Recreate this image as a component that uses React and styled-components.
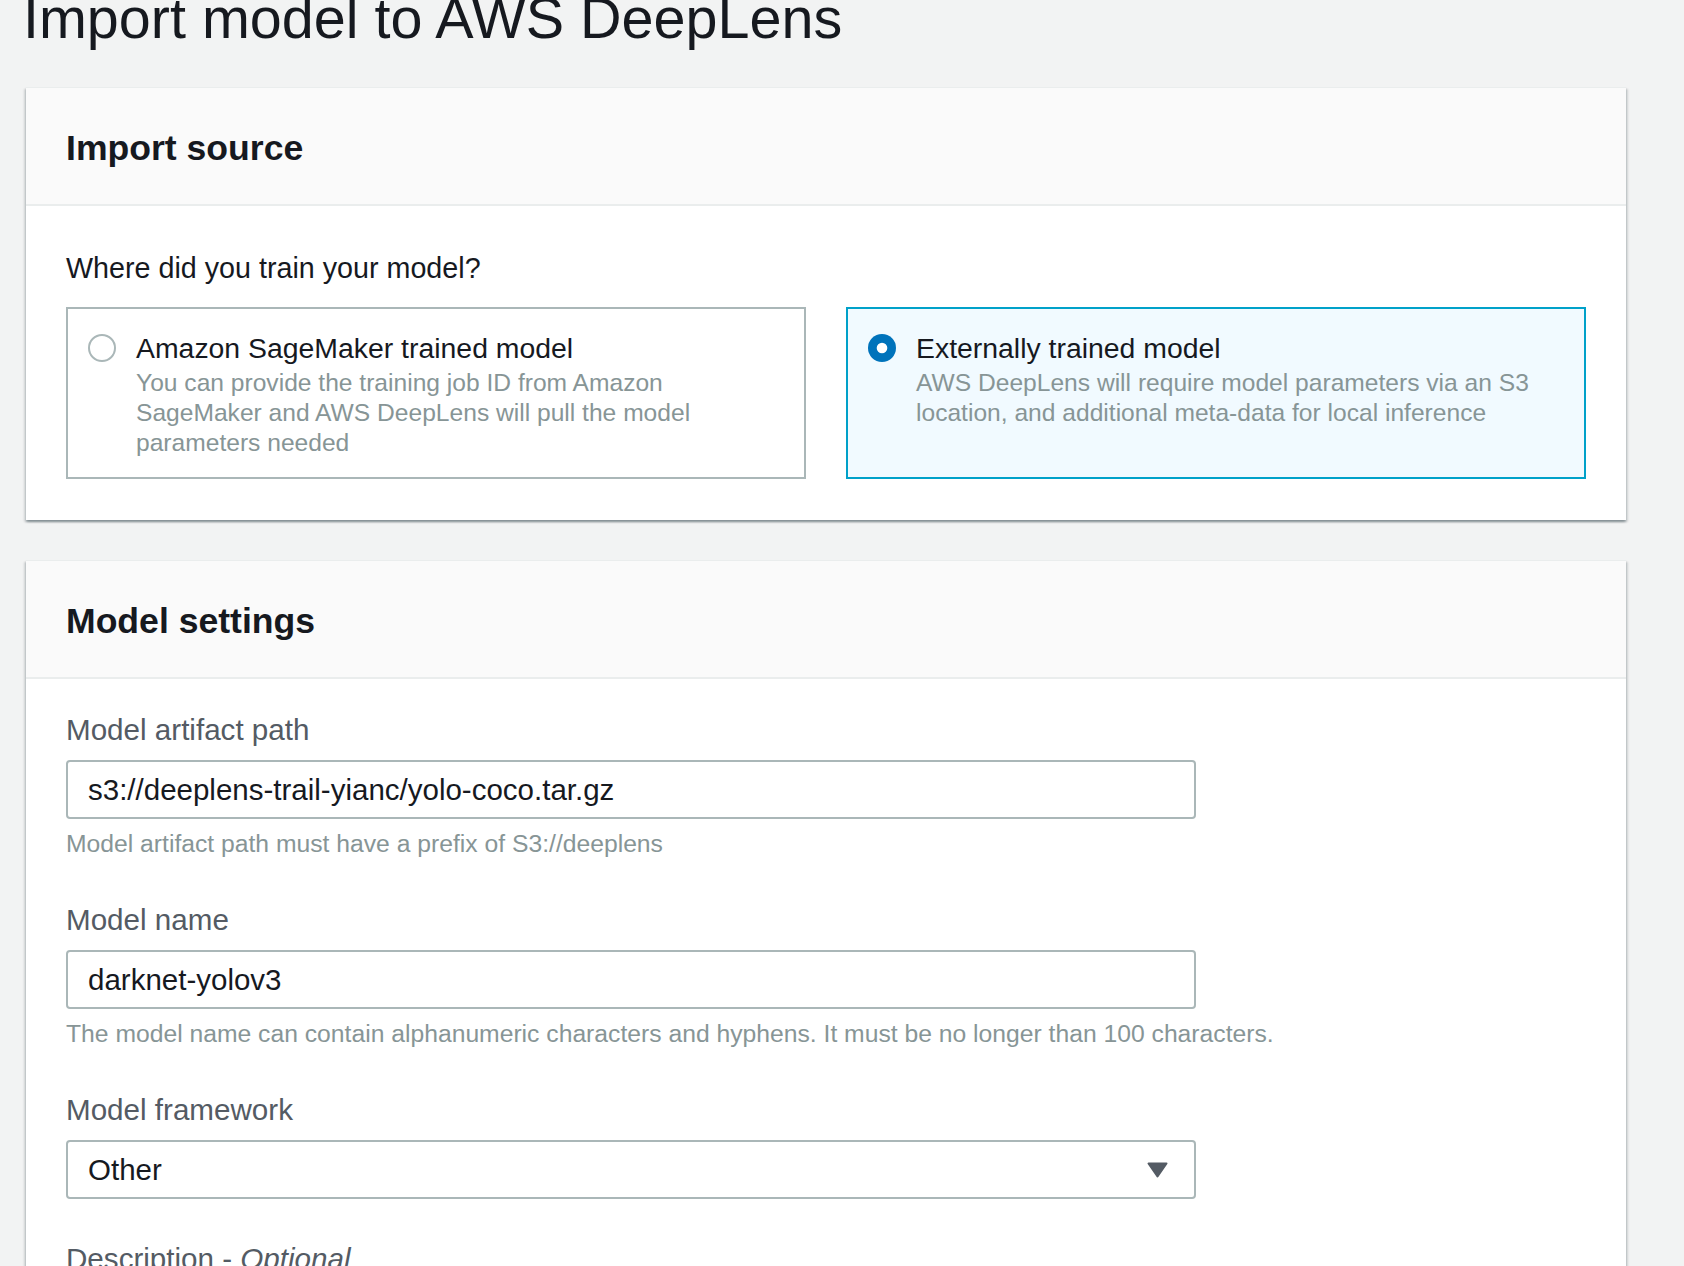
import styled, { createGlobalStyle } from 'styled-components'

const GlobalStyle = createGlobalStyle`
    html, body {
        margin: 0;
        padding: 0;
        background: #f2f3f3;
        font-family: "Liberation Sans", Arial, sans-serif;
        color: #16191f;
    }
    * { box-sizing: border-box; }
`

const sources = [
    {
        id: 'sagemaker',
        title: 'Amazon SageMaker trained model',
        desc: 'You can provide the training job ID from Amazon SageMaker and AWS DeepLens will pull the model parameters needed',
    },
    {
        id: 'external',
        title: 'Externally trained model',
        desc: 'AWS DeepLens will require model parameters via an S3 location, and additional meta-data for local inference',
    },
]

const RadioIcon = ({ checked }) => (
    <svg width="28" height="28" viewBox="0 0 28 28">
        {checked ? (
            <>
                <circle cx="14" cy="14" r="14" fill="#0073bb" />
                <circle cx="14" cy="14" r="5.3" fill="#ffffff" />
            </>
        ) : (
            <circle cx="14" cy="14" r="13" fill="#ffffff" stroke="#aab7b8" strokeWidth="2" />
        )}
    </svg>
)

const Caret = () => (
    <svg width="21" height="16" viewBox="0 0 21 16">
        <path d="M1.5 1.5 L19.5 1.5 L10.5 14.5 Z" fill="#545b64" stroke="#545b64" strokeWidth="2" strokeLinejoin="round" />
    </svg>
)

const App = () => {
    const selected = 'external'

    return (
        <Page>
            <GlobalStyle />
            <Title>Import model to AWS DeepLens</Title>

            <Card>
                <CardHeader>
                    <H2>Import source</H2>
                </CardHeader>
                <CardBody $top={42}>
                    <Question>Where did you train your model?</Question>
                    <Tiles>
                        {sources.map((s) => (
                            <Tile key={s.id} $checked={s.id === selected}>
                                <RadioBox>
                                    <RadioIcon checked={s.id === selected} />
                                </RadioBox>
                                <TileText>
                                    <TileTitle>{s.title}</TileTitle>
                                    <TileDesc>{s.desc}</TileDesc>
                                </TileText>
                            </Tile>
                        ))}
                    </Tiles>
                </CardBody>
            </Card>

            <Card>
                <CardHeader>
                    <H2>Model settings</H2>
                </CardHeader>
                <CardBody $top={31}>
                    <Field>
                        <Label>Model artifact path</Label>
                        <Input readOnly value="s3://deeplens-trail-yianc/yolo-coco.tar.gz" />
                        <Hint>Model artifact path must have a prefix of S3://deeplens</Hint>
                    </Field>
                    <Field>
                        <Label>Model name</Label>
                        <Input readOnly value="darknet-yolov3" />
                        <Hint>The model name can contain alphanumeric characters and hyphens. It must be no longer than 100 characters.</Hint>
                    </Field>
                    <Field>
                        <Label>Model framework</Label>
                        <Select>
                            <span>Other</span>
                            <Caret />
                        </Select>
                    </Field>
                    <Field>
                        <Label>Description - <em>Optional</em></Label>
                        <Input readOnly value="" />
                    </Field>
                </CardBody>
            </Card>
        </Page>
    )
}

export default App

const Page = styled.div`
    width: 1684px;
    padding: 0 58px 40px 26px;
`

const Title = styled.h1`
    margin: -14px 0 37px -3px;
    font-size: 57.5px;
    line-height: 64px;
    font-weight: 400;
    color: #16191f;
`

const Card = styled.section`
    background: #ffffff;
    border-top: 1px solid #eaeded;
    box-shadow: 0 2px 2px 0 rgba(0, 28, 36, 0.3), 2px 2px 2px 0 rgba(0, 28, 36, 0.12), -2px 2px 2px 0 rgba(0, 28, 36, 0.12);
    margin-bottom: 40px;
`

const CardHeader = styled.div`
    background: #fafafa;
    border-bottom: 2px solid #eaeded;
    padding: 40px 40px 36px;
`

const H2 = styled.h2`
    margin: 0;
    font-size: 35.6px;
    line-height: 40px;
    font-weight: 700;
    color: #16191f;
`

const CardBody = styled.div`
    padding: ${(p) => p.$top}px 40px 41px;
`

const Question = styled.div`
    font-size: 28.7px;
    line-height: 40px;
    color: #16191f;
    margin-bottom: 19px;
`

const Tiles = styled.div`
    display: grid;
    grid-template-columns: 1fr 1fr;
    gap: 40px;
`

const Tile = styled.div`
    display: flex;
    gap: 20px;
    min-height: 172px;
    padding: 19px 20px 18px 20px;
    border: 2px solid ${(p) => (p.$checked ? '#00a1c9' : '#aab7b8')};
    background: ${(p) => (p.$checked ? '#f1faff' : '#ffffff')};
`

const RadioBox = styled.div`
    flex: 0 0 28px;
    height: 40px;
    display: flex;
    align-items: center;
`

const TileText = styled.div`
    display: flex;
    flex-direction: column;
`

const TileTitle = styled.div`
    font-size: 28.4px;
    line-height: 40px;
    color: #16191f;
`

const TileDesc = styled.div`
    font-size: 24.6px;
    line-height: 30px;
    color: #879596;
`

const Field = styled.div`
    display: flex;
    flex-direction: column;
    align-items: flex-start;
    margin-bottom: 40px;
`

const Label = styled.label`
    font-size: 29.6px;
    line-height: 40px;
    color: #545b64;
    margin-bottom: 10px;

    em {
        font-style: italic;
    }
`

const Input = styled.input`
    width: 1130px;
    height: 59px;
    padding: 0 20px;
    border: 2px solid #aab7b8;
    border-radius: 4px;
    background: #ffffff;
    font-family: "Liberation Sans", Arial, sans-serif;
    font-size: 29.5px;
    color: #16191f;
    outline: none;
`

const Select = styled.div`
    width: 1130px;
    height: 59px;
    padding: 0 26px 0 20px;
    border: 2px solid #aab7b8;
    border-radius: 4px;
    background: #ffffff;
    display: flex;
    align-items: center;
    justify-content: space-between;
    font-size: 29.5px;
    color: #16191f;
`

const Hint = styled.div`
    margin-top: 9px;
    font-size: 24.7px;
    line-height: 32px;
    color: #879596;
`
